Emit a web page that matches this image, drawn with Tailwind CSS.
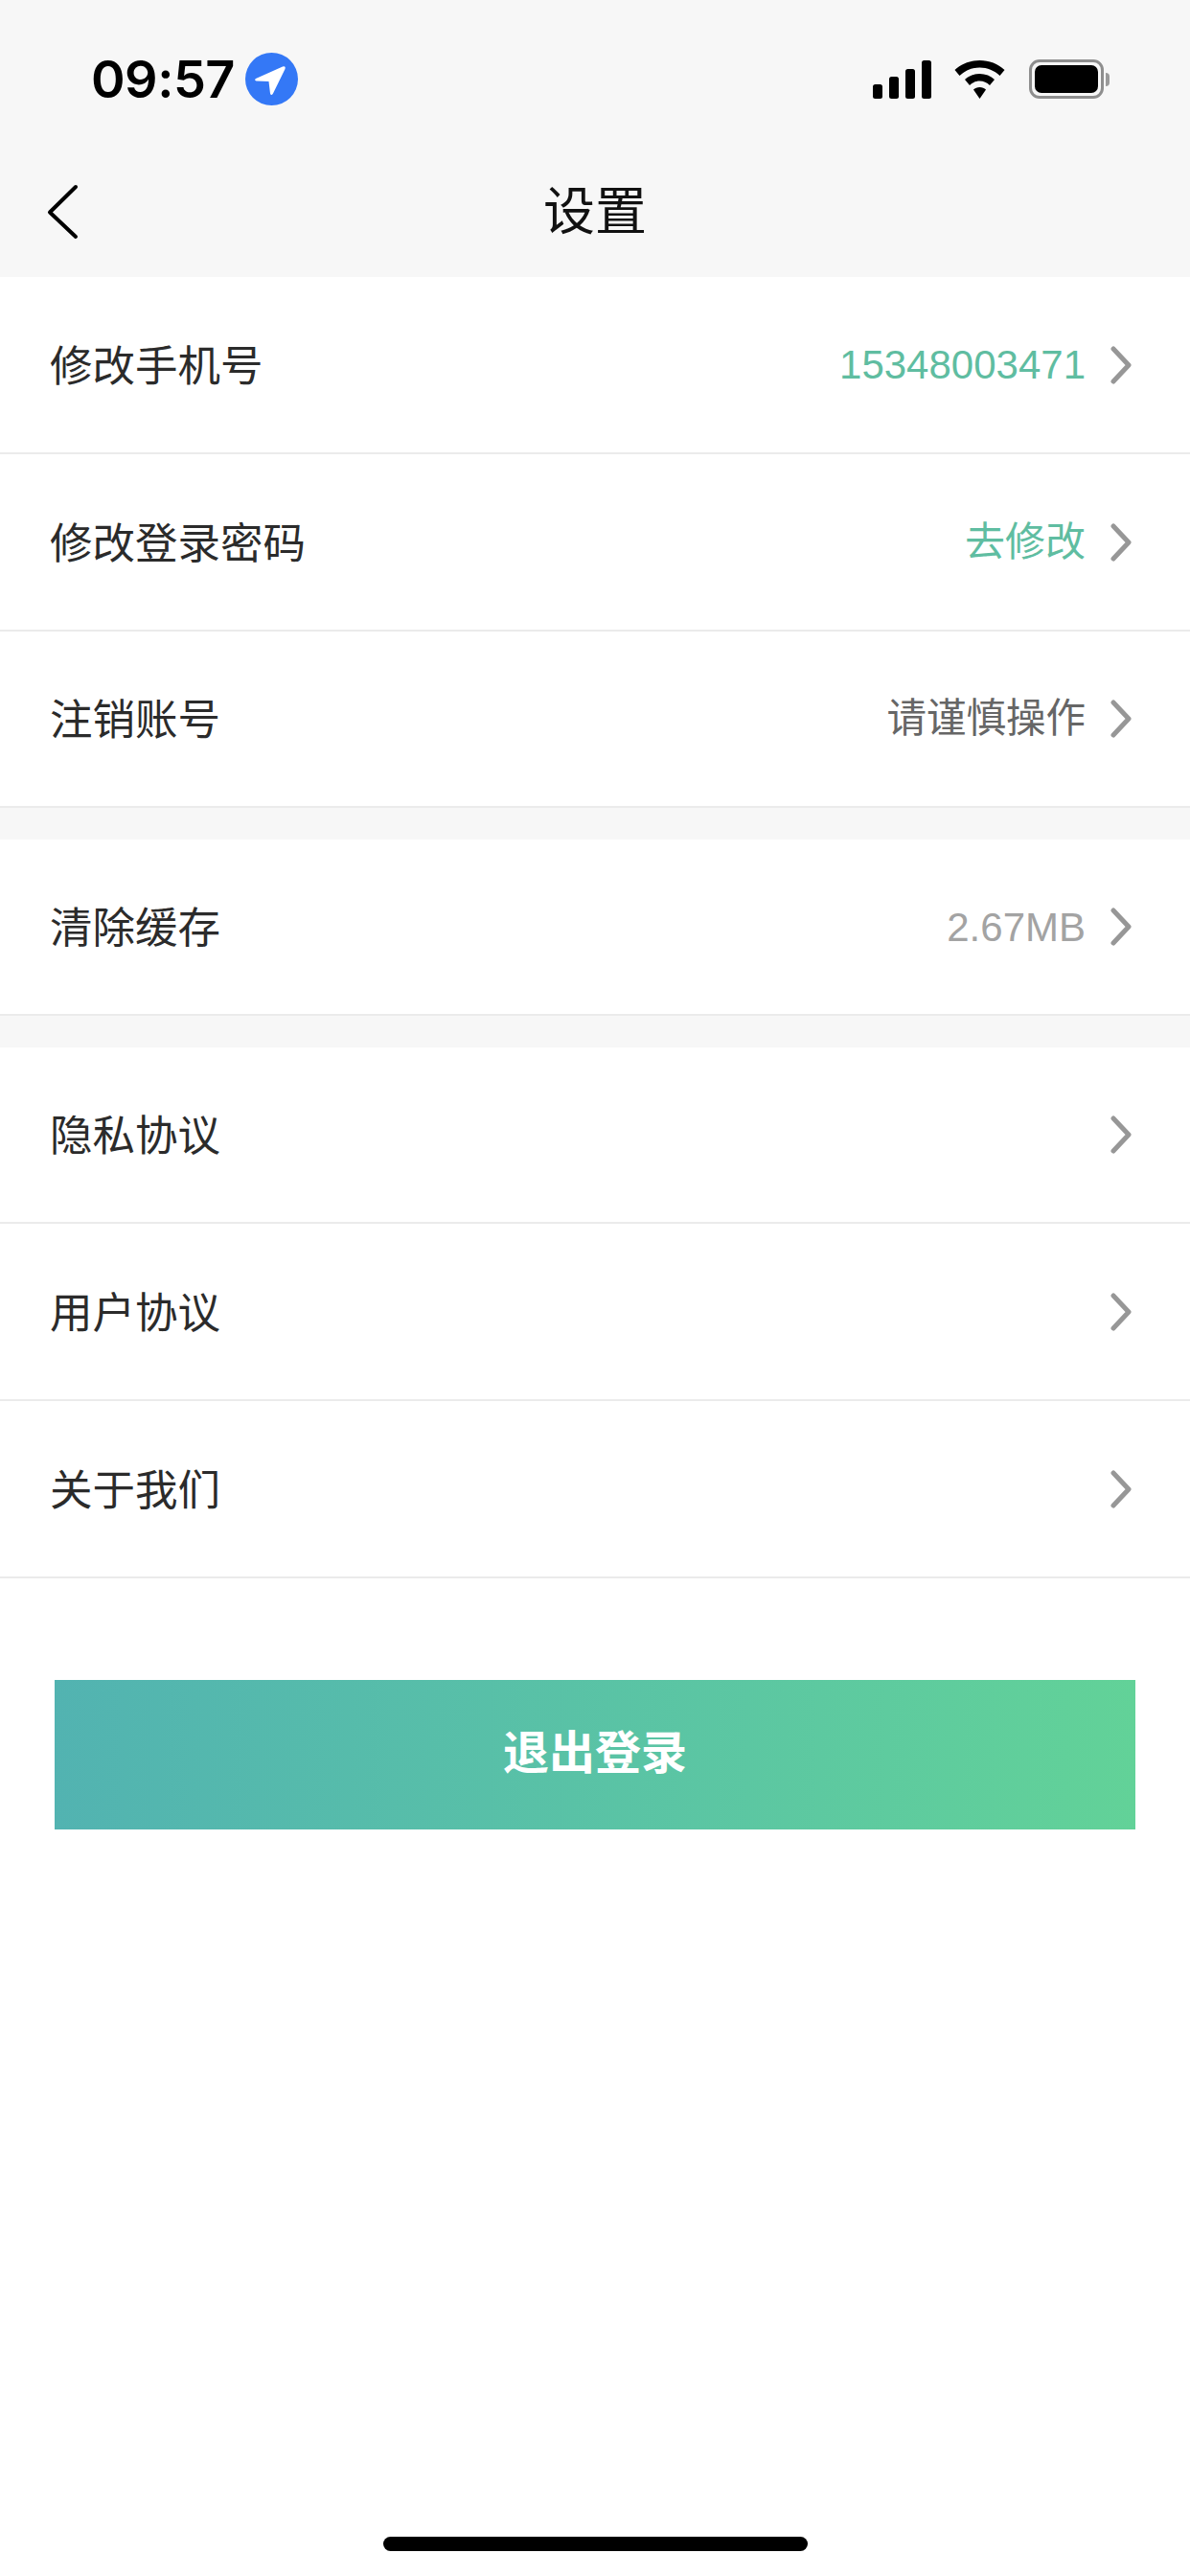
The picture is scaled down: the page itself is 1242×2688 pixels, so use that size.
<!DOCTYPE html>
<html lang="zh-CN">
<head>
  <meta charset="utf-8">
  <meta name="viewport" content="width=device-width, initial-scale=1.0">
  <title>设置</title>
  <script src="https://cdn.jsdelivr.net/npm/@tailwindcss/browser@4"></script>
</head>
<body class="bg-white font-['Liberation_Sans','Noto_Sans_CJK_SC',sans-serif] min-h-[2688px] w-[1242px] relative overflow-hidden">

  <!-- status bar + nav -->
  <header class="bg-[#f7f7f7] h-[289px] flex flex-col">
    <div class="h-[168px] flex items-start justify-between pt-[55px] pl-[95px] pr-[84px]">
      <div class="flex items-center gap-[11px]">
        <span class="text-[54px] leading-[55px] font-semibold text-black font-['Inter',sans-serif] tracking-[-0.5px]">09:57</span>
        <svg class="w-[55px] h-[55px]" viewBox="0 0 55 55">
          <circle cx="27.5" cy="27.5" r="27.5" fill="#3478f6"/>
          <path d="M11 27 L39 14.500 Q42.500 13.500 41.500 17 L29 42.500 Q27 45.500 26 42.500 L24.500 30 L11.500 29.500 Q9 28.500 11 27 Z" fill="#fff"/>
        </svg>
      </div>
      <div class="flex items-center gap-[24px] pt-[7px]">
        <svg class="w-[61px] h-[40px]" viewBox="0 0 61 40" fill="#000">
          <rect x="0" y="25" width="10" height="15" rx="2.500"/>
          <rect x="17" y="17" width="10" height="23" rx="2.500"/>
          <rect x="34" y="9" width="10" height="31" rx="2.500"/>
          <rect x="51" y="0" width="10" height="40" rx="2.500"/>
        </svg>
        <svg class="w-[53px] h-[40px]" viewBox="0 0 53 40" fill="#000">
          <path d="M26.500 0 C36.500 0 45.500 3.500 52.500 10 L47.500 16 C41.500 10.500 34.500 7.500 26.500 7.500 C18.500 7.500 11.500 10.500 5.500 16 L0.500 10 C7.500 3.500 16.500 0 26.500 0 Z"/>
          <path d="M26.500 14 C32.500 14 38 16 42 20 L37 26 C34 23 30.500 21.500 26.500 21.500 C22.500 21.500 19 23 16 26 L11 20 C15 16 20.500 14 26.500 14 Z"/>
          <path d="M26.500 28 C29 28 31.500 29 33 30.500 L26.500 40 L20 30.500 C21.500 29 24 28 26.500 28 Z"/>
        </svg>
        <div class="flex items-center gap-[2px] ml-[1px]">
          <div class="w-[78px] h-[41px] rounded-[11px] border-[3px] border-[#8e8e8e] p-[3px]">
            <div class="w-full h-full bg-black rounded-[7px]"></div>
          </div>
          <div class="w-[4px] h-[14px] bg-[#9a9a9a] rounded-r-[4px]"></div>
        </div>
      </div>
    </div>
    <div class="relative flex-1 flex items-center justify-center pb-[15px]">
      <svg class="absolute left-[48px] top-[24px] w-[36px] h-[58px]" viewBox="0 0 36 58" fill="none" stroke="#000" stroke-width="4" stroke-linecap="round" stroke-linejoin="round">
        <path d="M31 3 L4 29.500 L31 55"/>
      </svg>
      <h1 class="text-[54px] leading-[60px] text-[#111]">设置</h1>
    </div>
  </header>

  <main>
    <section>
      <a class="h-[185px] border-b-2 border-[#ebebeb] flex items-center justify-between pl-[52px] pr-[61px]">
        <span class="text-[44.5px] pt-[5px] text-[#2b2b2b]">修改手机号</span>
        <span class="flex items-center gap-[26px]">
          <span class="text-[42px] text-[#5fbda1]">15348003471</span>
          <svg class="w-[22px] h-[40px]" viewBox="0 0 22 40" fill="none" stroke="#979797" stroke-width="5" stroke-linecap="round" stroke-linejoin="round"><path d="M3 3 L19 20 L3 37"/></svg>
        </span>
      </a>
      <a class="h-[185px] border-b-2 border-[#ebebeb] flex items-center justify-between pl-[52px] pr-[61px]">
        <span class="text-[44.5px] pt-[5px] text-[#2b2b2b]">修改登录密码</span>
        <span class="flex items-center gap-[26px]">
          <span class="text-[42px] text-[#5fbda1]">去修改</span>
          <svg class="w-[22px] h-[40px]" viewBox="0 0 22 40" fill="none" stroke="#979797" stroke-width="5" stroke-linecap="round" stroke-linejoin="round"><path d="M3 3 L19 20 L3 37"/></svg>
        </span>
      </a>
      <a class="h-[184px] border-b-2 border-[#ebebeb] flex items-center justify-between pl-[52px] pr-[61px]">
        <span class="text-[44.5px] pt-[5px] text-[#2b2b2b]">注销账号</span>
        <span class="flex items-center gap-[26px]">
          <span class="text-[41.5px] text-[#666]">请谨慎操作</span>
          <svg class="w-[22px] h-[40px]" viewBox="0 0 22 40" fill="none" stroke="#979797" stroke-width="5" stroke-linecap="round" stroke-linejoin="round"><path d="M3 3 L19 20 L3 37"/></svg>
        </span>
      </a>
    </section>

    <div class="h-[33px] bg-[#f7f7f7]"></div>

    <section>
      <a class="h-[184px] border-b-2 border-[#ebebeb] flex items-center justify-between pl-[52px] pr-[61px]">
        <span class="text-[44.5px] pt-[5px] text-[#2b2b2b]">清除缓存</span>
        <span class="flex items-center gap-[26px]">
          <span class="text-[42px] text-[#a3a3a3]">2.67MB</span>
          <svg class="w-[22px] h-[40px]" viewBox="0 0 22 40" fill="none" stroke="#979797" stroke-width="5" stroke-linecap="round" stroke-linejoin="round"><path d="M3 3 L19 20 L3 37"/></svg>
        </span>
      </a>
    </section>

    <div class="h-[33px] bg-[#f7f7f7]"></div>

    <section>
      <a class="h-[184px] border-b-2 border-[#ebebeb] flex items-center justify-between pl-[52px] pr-[61px]">
        <span class="text-[44.5px] pt-[5px] text-[#2b2b2b]">隐私协议</span>
        <svg class="w-[22px] h-[40px]" viewBox="0 0 22 40" fill="none" stroke="#979797" stroke-width="5" stroke-linecap="round" stroke-linejoin="round"><path d="M3 3 L19 20 L3 37"/></svg>
      </a>
      <a class="h-[185px] border-b-2 border-[#ebebeb] flex items-center justify-between pl-[52px] pr-[61px]">
        <span class="text-[44.5px] pt-[5px] text-[#2b2b2b]">用户协议</span>
        <svg class="w-[22px] h-[40px]" viewBox="0 0 22 40" fill="none" stroke="#979797" stroke-width="5" stroke-linecap="round" stroke-linejoin="round"><path d="M3 3 L19 20 L3 37"/></svg>
      </a>
      <a class="h-[185px] border-b-2 border-[#ebebeb] flex items-center justify-between pl-[52px] pr-[61px]">
        <span class="text-[44.5px] pt-[5px] text-[#2b2b2b]">关于我们</span>
        <svg class="w-[22px] h-[40px]" viewBox="0 0 22 40" fill="none" stroke="#979797" stroke-width="5" stroke-linecap="round" stroke-linejoin="round"><path d="M3 3 L19 20 L3 37"/></svg>
      </a>
    </section>

    <div class="pt-[106px] px-[57px]">
      <button class="w-full h-[156px] pb-[3px] bg-linear-to-r from-[#52b3b1] to-[#62d298] text-white text-[48px] font-bold">退出登录</button>
    </div>
  </main>

  <!-- home indicator -->
  <div class="absolute left-[400px] top-[2647px] w-[443px] h-[15px] bg-black rounded-full"></div>
</body>
</html>
